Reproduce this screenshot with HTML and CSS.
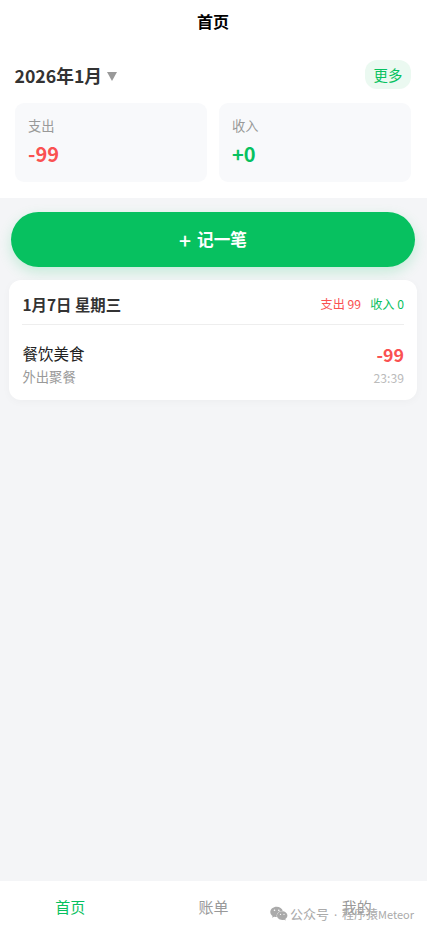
FILE: index.html
```html
<!DOCTYPE html>
<html lang="zh-CN">
<head>
    <meta charset="UTF-8">
    <meta name="viewport" content="width=device-width, initial-scale=1.0">
    <title>首页</title>
    <link rel="stylesheet" href="styles.css">
</head>
<body>
    <header class="navbar">首页</header>

    <section class="summary">
        <div class="summary-top">
            <div class="month"><span>2026年1月</span><span class="arrow"></span></div>
            <a class="more">更多</a>
        </div>
        <div class="totals">
            <div class="total">
                <div class="total-label">支出</div>
                <div class="total-value expense">-99</div>
            </div>
            <div class="total">
                <div class="total-label">收入</div>
                <div class="total-value income">+0</div>
            </div>
        </div>
    </section>

    <main class="content">
        <button class="add-button"><span class="plus">+</span><span class="add-label">记一笔</span></button>

        <div class="day-card">
            <div class="day-header">
                <div class="day-title">1月7日 星期三</div>
                <div class="day-totals">
                    <span class="expense">支出 99</span>
                    <span class="income">收入 0</span>
                </div>
            </div>
            <div class="record">
                <div>
                    <div class="record-name">餐饮美食</div>
                    <div class="record-note">外出聚餐</div>
                </div>
                <div class="record-right">
                    <div class="record-amount expense">-99</div>
                    <div class="record-time">23:39</div>
                </div>
            </div>
        </div>
    </main>

    <nav class="tabbar">
        <a class="tab active">首页</a>
        <a class="tab">账单</a>
        <a class="tab">我的</a>
    </nav>

    <div class="watermark">
        <svg viewBox="0 0 18 15" width="18" height="15">
            <path fill="#aaa" d="M6.7.7C3.1.7.3 3 .3 5.9c0 1.6.9 3 2.3 4L2 11.8l2.2-1.1c.8.2 1.6.4 2.6.4C6 7.6 8.7 4.7 12.8 4.7 12.2 2.4 9.7.7 6.7.7z"/>
            <path fill="#aaa" d="M12.2 5.3c-3 0-5.200 1.900-5.200 4.300s2.200 4.400 5.200 4.400c.7 0 1.300-.1 1.900-.3l1.700.9-.5-1.500c1.300-.8 2.100-2 2.100-3.500 0-2.400-2.300-4.300-5.200-4.300z"/>
            <g fill="#fff">
                <circle cx="4.5" cy="4.2" r=".8"/>
                <circle cx="8.8" cy="4.2" r=".8"/>
                <circle cx="10.5" cy="8.3" r=".65"/>
                <circle cx="14" cy="8.3" r=".65"/>
            </g>
        </svg>
        <span class="wm-label">公众号</span>
        <span class="wm-dot">·</span>
        <span class="wm-name">程序猿<span class="wm-latin">Meteor</span></span>
    </div>
</body>
</html>
```
FILE: styles.css
```css
* {
    box-sizing: border-box;
}
body {
    margin: 0;
    min-height: 100vh;
    display: flex;
    flex-direction: column;
    background: #f4f5f7;
    color: #333;
    font-family: "Noto Sans CJK SC", sans-serif;
}
.navbar {
    height: 44px;
    padding-right: 1px;
    line-height: 42px;
    text-align: center;
    font-size: 16px;
    font-weight: 700;
    color: #000;
    background: #fff;
}
.summary {
    height: 154px;
    padding: 16px 16px 16px 15px;
    background: #fff;
}
.summary-top {
    display: flex;
    justify-content: space-between;
    align-items: center;
    height: 29px;
    margin-bottom: 14px;
}
.month {
    display: flex;
    align-items: center;
    gap: 5px;
    margin-left: -0.5px;
    padding-top: 2px;
    font-size: 17.7px;
    line-height: 29px;
    font-weight: 700;
}
.arrow {
    margin-top: 1px;
    border: 5.5px solid transparent;
    border-top: 9px solid #999;
    border-bottom: 0;
}
.more {
    width: 46px;
    height: 29px;
    border-radius: 12px;
    background: #ebf9f1;
    color: #07c160;
    font-size: 14.4px;
    line-height: 29px;
    text-align: center;
}
.totals {
    display: flex;
    gap: 12px;
}
.total {
    flex: 1;
    height: 79px;
    padding: 13px;
    border-radius: 9px;
    background: #f8f9fb;
}
.total-label {
    font-size: 13.3px;
    line-height: 19px;
    color: #999;
}
.total-value {
    margin-top: 4px;
    font-size: 20px;
    line-height: 30px;
    font-weight: 700;
}
.expense {
    color: #fa5151;
}
.income {
    color: #07c160;
}
.content {
    flex: 1;
    padding: 14px 10px 0 9px;
}
.add-button {
    display: flex;
    align-items: center;
    justify-content: center;
    gap: 6px;
    width: 404px;
    height: 55px;
    margin: 0 2px 13px;
    padding: 0;
    border: none;
    border-radius: 28px;
    background: #07c160;
    box-shadow: 0 5px 14px rgba(7, 193, 96, 0.2);
    color: #fff;
    font-family: inherit;
    font-size: 16.6px;
    font-weight: 700;
}
.plus {
    font-size: 21px;
    font-weight: 500;
}
.add-label {
    padding-bottom: 2px;
}
.day-card {
    height: 120px;
    padding: 12px 13px;
    border-radius: 12px;
    background: #fff;
    box-shadow: 0 2px 9px rgba(0, 0, 0, 0.03);
}
.day-header {
    display: flex;
    justify-content: space-between;
    align-items: center;
    height: 33px;
    padding-bottom: 8px;
    border-bottom: 1px solid #eee;
}
.day-title {
    padding-left: 0.5px;
    font-size: 15.4px;
    font-weight: 700;
}
.day-totals {
    display: flex;
    gap: 9px;
    font-size: 12.2px;
}
.record {
    display: flex;
    justify-content: space-between;
    padding: 17px 0 0 0.5px;
}
.record-name {
    font-size: 15.5px;
    line-height: 22px;
    color: #222;
}
.record-note {
    margin-top: 3px;
    font-size: 13.3px;
    line-height: 20px;
    color: #999;
}
.record-right {
    text-align: right;
}
.record-amount {
    font-size: 17.8px;
    line-height: 24px;
    font-weight: 700;
}
.record-time {
    margin-top: 3px;
    font-size: 12.2px;
    line-height: 19px;
    color: #bbb;
}
.tabbar {
    display: flex;
    height: 50px;
    background: #fff;
}
.tab {
    flex: 1;
    padding-right: 2px;
    text-align: center;
    font-size: 15px;
    line-height: 52px;
    color: #999;
}
.tab:first-child {
    padding-right: 3px;
}
.tab:last-child {
    padding: 0 0 0 1px;
}
.tab.active {
    color: #07c160;
}
/* sits over the tab bar */
.watermark {
    position: absolute;
    right: 13px;
    bottom: 8px;
    display: flex;
    align-items: center;
    height: 19px;
    color: #aaa;
    font-size: 12px;
}
.wm-label {
    margin-left: 2px;
    font-size: 13px;
}
.wm-dot {
    width: 13px;
    padding-top: 3px;
    text-align: center;
    font-family: "Noto Sans", sans-serif;
}
.wm-latin {
    font-size: 11px;
}
```
